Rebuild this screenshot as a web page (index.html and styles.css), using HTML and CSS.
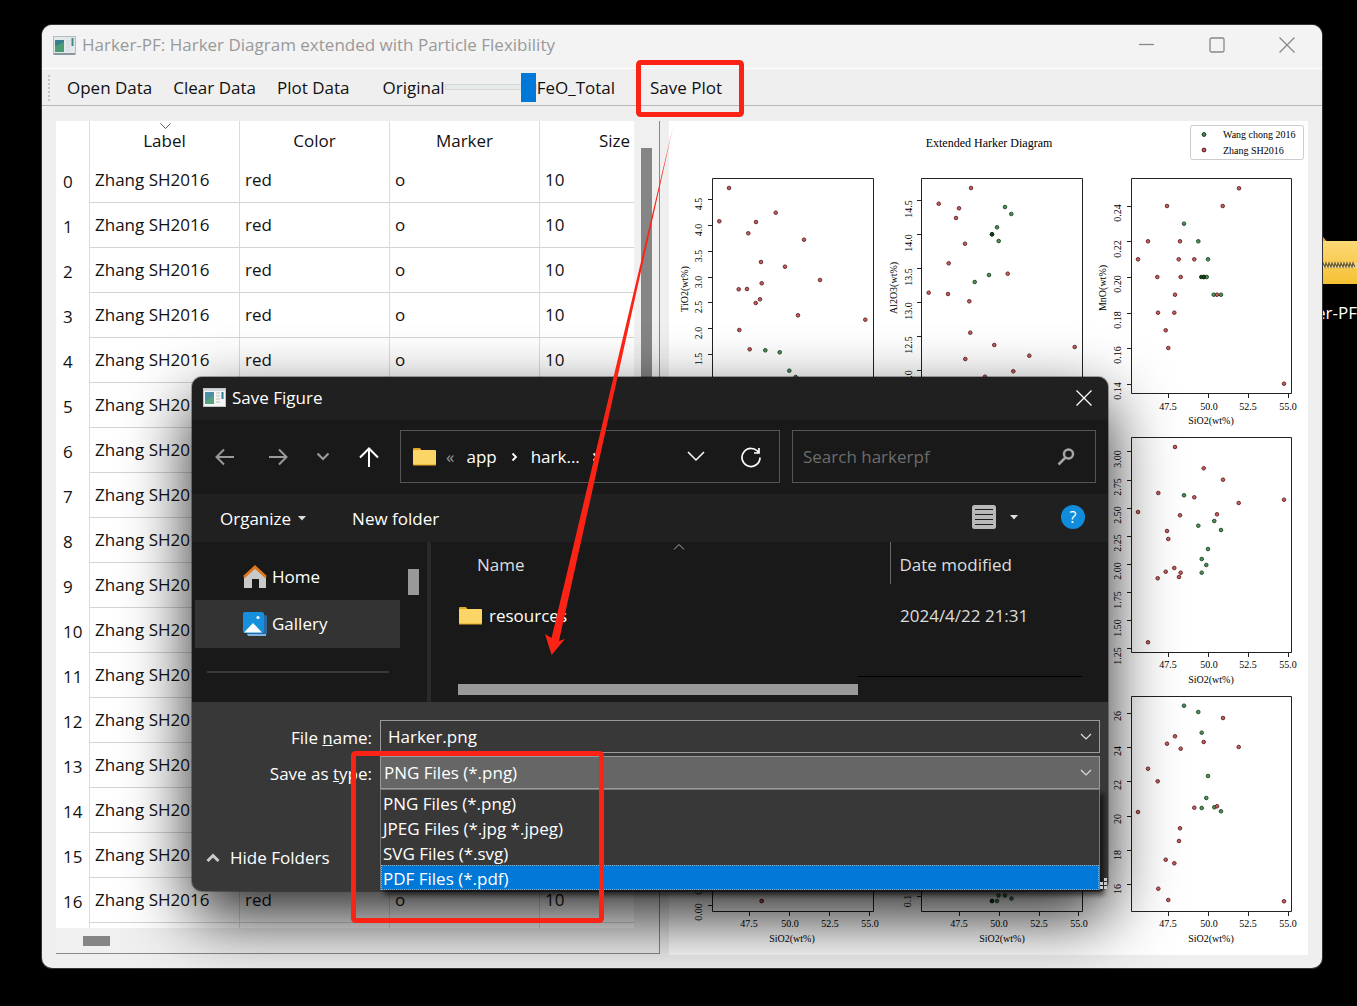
FILE: index.html
```html
<!DOCTYPE html>
<html lang="en">
<head>
<meta charset="utf-8">
<title>Harker-PF</title>
<link rel="stylesheet" href="styles.css">
</head>
<body class="desktop">
<div class="shortcut">
  <svg class="shortcut-icon" width="64" height="50" viewBox="0 0 64 50" aria-hidden="true">
    <defs><linearGradient id="zip" x1="0" y1="0" x2="0" y2="1"><stop offset="0" stop-color="#fbd976"/><stop offset="1" stop-color="#f6c033"/></linearGradient></defs>
    <path d="M2 4q0-4 4-4h19q4 0 6 3l5 6v10H2z" fill="#e2a21c"/>
    <rect x="2" y="6" width="66" height="43" fill="url(#zip)"/>
    <path d="M20 28h44v5H20z" fill="#e8d9a8"/>
    <path d="M2 32l1-4 2 4 1-4 2 4 1-4 2 4 1-4 2 4 1-4 2 4 1-4 2 4 1-4 2 4 1-4 2 4 1-4 2 4 1-4 2 4 1-4 2 4 1-4 2 4 1-4 2 4 1-4 2 4 1-4 2 4 1-4 2 4 1-4 2 4 1-4 2 4 1-4 2 4 1-4 2 4" fill="none" stroke="#6b5a2a" stroke-width="1.200"/>
  </svg>
  <span>Harker-PF</span>
</div>

<main class="app">
  <header class="app-title">
    <svg width="23" height="19" viewBox="0 0 23 19" aria-hidden="true"><rect x=".5" y=".5" width="22" height="18" fill="#e3e8eb" stroke="#b3bcc2"/><path d="M1 18h21" stroke="#8b979e" stroke-width="2"/><rect x="2" y="4" width="9" height="12" fill="#3a7c93"/><path d="M2 10l9-4v10H2z" fill="#4a9b72"/><path d="M13 5h4M13 8h4M13 11h4M13 14h4" stroke="#d0d5d9"/><path d="M19.500 2v8" stroke="#3f8a86" stroke-width="2"/></svg>
    <h1>Harker-PF: Harker Diagram extended with Particle Flexibility</h1>
    <div class="app-controls">
      <button type="button" aria-label="Minimize"><svg width="16" height="16" viewBox="0 0 16 16"><path d="M0 7.500h15"/></svg></button>
      <button type="button" aria-label="Maximize"><svg width="16" height="16" viewBox="0 0 16 16"><rect x="1" y="1" width="14" height="14" rx="1.500"/></svg></button>
      <button type="button" aria-label="Close"><svg width="16" height="16" viewBox="0 0 16 16"><path d="M.5 .5l15 15M15.500 .5l-15 15"/></svg></button>
    </div>
  </header>
  <div class="toolbar">
    <span class="toolbar-grip"></span>
    <button type="button" class="tool">Open Data</button>
    <button type="button" class="tool">Clear Data</button>
    <button type="button" class="tool">Plot Data</button>
    <div class="mode">
      <label for="mode">Original</label>
      <input id="mode" type="range" min="0" max="1" value="1">
      <span>FeO_Total</span>
    </div>
    <button type="button" class="tool">Save Plot</button>
  </div>
  <div class="workspace">
    <section class="data">
      <div class="data-view">
        <table>
          <colgroup><col class="col-index"><col class="col"><col class="col"><col class="col"><col class="col"></colgroup>
          <thead><tr><td></td><th><svg class="sort" width="12" height="6" viewBox="0 0 12 6" aria-hidden="true"><path d="M.5 .5l5 5 5-5" fill="none" stroke="#555"/></svg>Label</th><th>Color</th><th>Marker</th><th>Size</th></tr></thead>
          <tbody>
            <tr><th>0</th><td>Zhang SH2016</td><td>red</td><td>o</td><td>10</td></tr>
            <tr><th>1</th><td>Zhang SH2016</td><td>red</td><td>o</td><td>10</td></tr>
            <tr><th>2</th><td>Zhang SH2016</td><td>red</td><td>o</td><td>10</td></tr>
            <tr><th>3</th><td>Zhang SH2016</td><td>red</td><td>o</td><td>10</td></tr>
            <tr><th>4</th><td>Zhang SH2016</td><td>red</td><td>o</td><td>10</td></tr>
            <tr><th>5</th><td>Zhang SH2016</td><td>red</td><td>o</td><td>10</td></tr>
            <tr><th>6</th><td>Zhang SH2016</td><td>red</td><td>o</td><td>10</td></tr>
            <tr><th>7</th><td>Zhang SH2016</td><td>red</td><td>o</td><td>10</td></tr>
            <tr><th>8</th><td>Zhang SH2016</td><td>red</td><td>o</td><td>10</td></tr>
            <tr><th>9</th><td>Zhang SH2016</td><td>red</td><td>o</td><td>10</td></tr>
            <tr><th>10</th><td>Zhang SH2016</td><td>red</td><td>o</td><td>10</td></tr>
            <tr><th>11</th><td>Zhang SH2016</td><td>red</td><td>o</td><td>10</td></tr>
            <tr><th>12</th><td>Zhang SH2016</td><td>red</td><td>o</td><td>10</td></tr>
            <tr><th>13</th><td>Zhang SH2016</td><td>red</td><td>o</td><td>10</td></tr>
            <tr><th>14</th><td>Zhang SH2016</td><td>red</td><td>o</td><td>10</td></tr>
            <tr><th>15</th><td>Zhang SH2016</td><td>red</td><td>o</td><td>10</td></tr>
            <tr><th>16</th><td>Zhang SH2016</td><td>red</td><td>o</td><td>10</td></tr>
            <tr><th></th><td></td><td></td><td></td><td></td></tr>
          </tbody>
        </table>
      </div>
      <div class="vscroll"><div class="vthumb"></div></div>
      <div class="hscroll"><div class="hthumb"></div></div>
    </section>
    <section class="figure">
      <svg class="plots" viewBox="669 121 639 834" role="img" aria-label="Extended Harker Diagram">
        <defs>
          <marker id="r" markerUnits="userSpaceOnUse" markerWidth="6" markerHeight="6" refX="3" refY="3"><circle cx="3" cy="3" r="1.800" fill="#c95d5d" stroke="#5a2020" stroke-width=".9"/></marker>
          <marker id="g" markerUnits="userSpaceOnUse" markerWidth="6" markerHeight="6" refX="3" refY="3"><circle cx="3" cy="3" r="1.800" fill="#4d9457" stroke="#1b4020" stroke-width=".9"/></marker>
          <marker id="d" markerUnits="userSpaceOnUse" markerWidth="6" markerHeight="6" refX="3" refY="3"><circle cx="3" cy="3" r="1.800" fill="#124018" stroke="#0b2a10" stroke-width=".9"/></marker>
        </defs>
        <text class="fig-title" x="989" y="147">Extended Harker Diagram</text>
        <rect x="1190.500" y="125.500" width="113" height="34" rx="2" fill="#fff" stroke="#ccc"/>
        <polyline class="g" points="1204,134.500 1204,134.500"/><polyline class="r" points="1204,150 1204,150"/>
        <text class="legend" x="1223" y="138">Wang chong 2016</text>
        <text class="legend" x="1223" y="154">Zhang SH2016</text>

        <g class="axes">
          <path d="M712.500 178.500h161v215h-161zM921.500 178.500h161v215h-161zM1131.500 178.500h160v215h-160z"/>
          <path d="M1131.500 437.500h160v215h-160zM712.500 696.500h161v215h-161zM921.500 696.500h161v215h-161zM1131.500 696.500h160v215h-160z"/>
          <path d="M708 199.500h4M708 225.500h4M708 251.500h4M708 277.500h4M708 302.500h4M708 328.500h4M708 354.500h4M917 200.500h4M917 234.500h4M917 268.500h4M917 302.500h4M917 336.500h4M917 370.500h4M1127 206.500h4M1127 241.500h4M1127 277.500h4M1127 313.500h4M1127 348.500h4M1127 384.500h4"/>
          <path d="M1127 451.500h4M1127 480.500h4M1127 508.500h4M1127 536.500h4M1127 564.500h4M1127 592.500h4M1127 620.500h4M1127 648.500h4M1127 713.500h4M1127 747.500h4M1127 781.500h4M1127 816.500h4M1127 850.500h4M1127 884.500h4M708 905.500h4M917 896.500h4"/>
          <path d="M1168.500 394v4M1208.500 394v4M1248.500 394v4M1288.500 394v4M1168.500 653v4M1208.500 653v4M1248.500 653v4M1288.500 653v4M1168.500 912v4M1208.500 912v4M1248.500 912v4M1288.500 912v4M749.500 912v4M789.500 912v4M829.500 912v4M869.500 912v4M959.500 912v4M999.500 912v4M1039.500 912v4M1078.500 912v4"/>
        </g>
        <g class="ticks">
          <text x="1168" y="410">47.5</text><text x="1209" y="410">50.0</text><text x="1248" y="410">52.5</text><text x="1288" y="410">55.0</text><text x="1211" y="424">SiO2(wt%)</text>
          <text x="1168" y="668">47.5</text><text x="1209" y="668">50.0</text><text x="1248" y="668">52.5</text><text x="1288" y="668">55.0</text><text x="1211" y="683">SiO2(wt%)</text>
          <text x="1168" y="927">47.5</text><text x="1209" y="927">50.0</text><text x="1248" y="927">52.5</text><text x="1288" y="927">55.0</text><text x="1211" y="942">SiO2(wt%)</text>
          <text x="749" y="927">47.5</text><text x="790" y="927">50.0</text><text x="830" y="927">52.5</text><text x="870" y="927">55.0</text><text x="792" y="942">SiO2(wt%)</text>
          <text x="959" y="927">47.5</text><text x="999" y="927">50.0</text><text x="1039" y="927">52.5</text><text x="1079" y="927">55.0</text><text x="1002" y="942">SiO2(wt%)</text>
        </g>
        <g class="ticks" transform="rotate(-90)">
          <text x="-289" y="688">TiO2(wt%)</text><text x="-204" y="702">4.5</text><text x="-230" y="702">4.0</text><text x="-256" y="702">3.5</text><text x="-282" y="702">3.0</text><text x="-307" y="702">2.5</text><text x="-333" y="702">2.0</text><text x="-359" y="702">1.5</text>
          <text x="-288" y="897">Al2O3(wt%)</text><text x="-209" y="912">14.5</text><text x="-243" y="912">14.0</text><text x="-277" y="912">13.5</text><text x="-311" y="912">13.0</text><text x="-345" y="912">12.5</text><text x="-379" y="912">12.0</text>
          <text x="-288" y="1106">MnO(wt%)</text><text x="-213" y="1121">0.24</text><text x="-249" y="1121">0.22</text><text x="-284" y="1121">0.20</text><text x="-320" y="1121">0.18</text><text x="-355" y="1121">0.16</text><text x="-391" y="1121">0.14</text>
          <text x="-459" y="1121">3.00</text><text x="-487" y="1121">2.75</text><text x="-515" y="1121">2.50</text><text x="-543" y="1121">2.25</text><text x="-571" y="1121">2.00</text><text x="-600" y="1121">1.75</text><text x="-628" y="1121">1.50</text><text x="-656" y="1121">1.25</text>
          <text x="-716" y="1121">26</text><text x="-751" y="1121">24</text><text x="-785" y="1121">22</text><text x="-819" y="1121">20</text><text x="-855" y="1121">18</text><text x="-889" y="1121">16</text>
          <text x="-912" y="702">0.00</text><text x="-886" y="702">0.25</text><text x="-901" y="911">0.1</text>
        </g>
        <polyline class="r" points="729,188 719.300,221.300 756,222 748.300,233.300 775.700,212.700 804,239.700 761,262 785,266.700 820,280 761.700,283.300 738.700,289.300 747,289 760,299.300 755.700,303 798,315.300 865.300,319.700 739.300,330 749.700,349.300"/>
        <polyline class="g" points="765.300,350.300 779.700,352.300 789.300,370.700 795.700,377"/>
        <polyline class="r" points="971,188 938.700,203.700 959,208.300 956,218 965,243.700 948.700,263.300 1007.700,273.700 928.700,292.700 948,294 969.300,301.300 970.300,332.700 994.300,345 1074.700,347 1029.300,355.700 965.300,359 1013.300,371.300 985,376.700"/>
        <polyline class="g" points="1005,207 1011.300,214 997,227.300 998.700,241 989,275 974.700,282"/>
        <polyline class="d" points="992,234.300 992,234.300"/>
        <polyline class="g" points="1184,223.700 1198.300,241.300 1208,259.300 1206.700,277 1213.700,294.700 1221,294.700"/>
        <polyline class="r" points="1239,188.300 1167,206 1222.700,206 1148,241.300 1180,241.300 1138,259.300 1178.700,259.300 1194.300,259.300 1157.300,277 1180.700,277 1204,277 1175,294.700 1217,294.700 1158,312.700 1174.300,312.700 1165.700,330.300 1168.300,348 1284,383.700"/>
        <polyline class="d" points="1201.300,277 1203.700,277"/>
        <polyline class="r" points="1175,447 1203.700,468.300 1223,479.700 1158.300,493 1194.300,497.300 1238.700,503 1284,499.700 1138,512 1180,515.300 1217,514.300 1167,531 1168.300,539 1165.700,571.700 1174.300,568 1180.700,572.700 1179,577 1157.700,578.300 1148,642.300"/>
        <polyline class="g" points="1184,495.300 1214.300,521 1198.300,525.700 1221,530 1208,549 1201.700,559 1206.300,565 1201.700,572.700"/>
        <polyline class="g" points="1184,705.700 1198.300,712 1201.700,732.700 1208,776 1206.300,798 1201.700,808 1214.300,807.300 1221,811.300"/>
        <polyline class="r" points="1223,718 1175,736.300 1167,743.700 1180.700,748.700 1203.700,742 1238.700,747 1148,768.700 1157.700,781.300 1138,812 1194.300,807.700 1217,806.300 1180,828.300 1179,841 1165.700,859.700 1174.300,863.300 1158.300,888.700 1168.300,900 1284,901.300"/>
        <polyline class="r" points="761.700,901 761.700,901"/>
        <polyline class="d" points="992,901 992,901"/>
        <polyline class="g" points="997,901 998.500,895.500 1005,895.500 1011.500,898.500"/>
      </svg>
    </section>
  </div>
</main>

<div class="dialog" role="dialog" aria-label="Save Figure">
  <header class="dlg-title">
    <svg width="23" height="19" viewBox="0 0 23 19" aria-hidden="true"><rect x=".5" y=".5" width="22" height="18" fill="#f6f6f6" stroke="#bfc4c8"/><path d="M1 2h21" stroke="#d3d8dc" stroke-width="2"/><rect x="2" y="4" width="9" height="12" fill="#4b8fa5"/><path d="M2 12q5-1 9-6v10H2z" fill="#56a37d"/><path d="M13 5h4M13 8h4M13 11h4M13 14h4" stroke="#bbb"/><path d="M19.500 4v7" stroke="#2f7f8f" stroke-width="2"/></svg>
    <h2>Save Figure</h2>
    <button type="button" aria-label="Close"><svg width="16" height="16" viewBox="0 0 16 16"><path d="M.5 .5l15 15M15.500 .5l-15 15" stroke="#fff" stroke-width="1.300"/></svg></button>
  </header>
  <nav class="dlg-nav">
    <button type="button" aria-label="Back"><svg width="20" height="20" viewBox="0 0 20 20"><path d="M19 10H2M9 2.500L1.500 10 9 17.500" stroke="#9a9a9a" stroke-width="2"/></svg></button>
    <button type="button" aria-label="Forward"><svg width="20" height="20" viewBox="0 0 20 20"><path d="M1 10h17M11 2.500l7.500 7.500-7.500 7.500" stroke="#9a9a9a" stroke-width="2"/></svg></button>
    <button type="button" class="narrow" aria-label="Recent locations"><svg width="14" height="9" viewBox="0 0 14 9"><path d="M1.500 1.500L7 7l5.500-5.500" stroke="#9a9a9a" stroke-width="2.200"/></svg></button>
    <button type="button" aria-label="Up"><svg width="20" height="20" viewBox="0 0 20 20"><path d="M10 20V1.500M1 10.500l9-9 9 9" stroke="#fff" stroke-width="2"/></svg></button>
    <div class="address">
      <svg width="23" height="18" viewBox="0 0 23 18"><path d="M0 1q0-1 1-1h6l2 3H0z" fill="#e5a520"/><rect y="2" width="23" height="15" rx="1" fill="#fcd567"/><path d="M0 17h23" stroke="#e5a520"/></svg>
      <span class="more">«</span><a href="#app">app</a>
      <svg width="7" height="10" viewBox="0 0 7 10"><path d="M1.500 1.500L5 5 1.500 8.500" stroke="#fff" stroke-width="1.800"/></svg>
      <a href="#harkerpf" class="here">hark...</a>
      <svg width="7" height="10" viewBox="0 0 7 10"><path d="M1.500 1.500L5 5 1.500 8.500" stroke="#fff" stroke-width="1.800"/></svg>
      <button type="button" class="history" aria-label="Previous locations"><svg width="18" height="11" viewBox="0 0 18 11"><path d="M1 1l8 8 8-8" stroke="#fff" stroke-width="1.500"/></svg></button>
      <button type="button" aria-label="Refresh"><svg width="22" height="22" viewBox="0 0 22 22"><path d="M18.500 6.500a9 9 0 1 0 1.500 5M19 2v5h-5" stroke="#fff" stroke-width="1.700"/></svg></button>
    </div>
    <div class="search">
      <input type="search" placeholder="Search harkerpf" aria-label="Search harkerpf">
      <svg width="18" height="18" viewBox="0 0 18 18"><circle cx="11.500" cy="6" r="4.500" stroke="#a5a5a5" stroke-width="2.500"/><path d="M8.500 9.500L1.500 16.500" stroke="#a5a5a5" stroke-width="2.500"/></svg>
    </div>
  </nav>
  <div class="dlg-commands">
    <button type="button">Organize<svg width="8" height="5" viewBox="0 0 8 5"><path d="M0 0h8L4 4.500z" fill="#ddd" stroke="none"/></svg></button>
    <button type="button" class="new-folder">New folder</button>
    <button type="button" class="view" aria-label="Change view"><svg width="24" height="24" viewBox="0 0 24 24"><rect width="24" height="24" rx="2.500" fill="#b9b9b9"/><path d="M3 4.500h18M3 9.500h18M3 14.500h18M3 19.500h18" stroke="#1c1c1c"/></svg><svg width="8" height="5" viewBox="0 0 8 5"><path d="M0 0h8L4 4.500z" fill="#ddd" stroke="none"/></svg></button>
    <button type="button" class="help" aria-label="Help">?</button>
  </div>
  <div class="dlg-body">
    <div class="places">
      <a href="#home" class="place"><svg width="24" height="24" viewBox="0 0 24 24"><path d="M1 11L12 1l11 10v12h-7V14H9v9H1z" fill="#c9c9c9"/><path d="M1 12L12 2l11 10" stroke="#e0761c" stroke-width="2.800"/></svg>Home</a>
      <a href="#gallery" class="place current"><svg width="24" height="24" viewBox="0 0 24 24"><rect x="4" y="3" width="20" height="20" rx="2" fill="#2b67a0"/><path d="M4 22h19v2H5z" fill="#7db4e2"/><rect width="21" height="21" rx="2" fill="#1690dc"/><path d="M1 20.500l9-9.500 9 9.500z" fill="#fff"/><circle cx="15" cy="5.500" r="1.600" fill="#fff"/></svg>Gallery</a>
      <hr>
    </div>
    <div class="places-scroll"><div class="places-thumb"></div></div>
    <div class="files">
      <table>
        <thead><tr><th class="name"><svg class="asc" width="12" height="6" viewBox="0 0 12 6" aria-hidden="true"><path d="M1 5.500l5-5 5 5" stroke="#aaa"/></svg>Name</th><th class="date">Date modified</th></tr></thead>
        <tbody><tr><td class="name"><div class="file"><svg width="23" height="18" viewBox="0 0 23 18"><path d="M0 1q0-1 1-1h6l2 3H0z" fill="#e5a520"/><rect y="2" width="23" height="15" rx="1" fill="#fcd567"/><path d="M0 17h23" stroke="#e5a520"/></svg>resources</div></td><td class="date">2024/4/22 21:31</td></tr></tbody>
      </table>
      <div class="files-scroll"><div class="files-thumb"></div><div class="files-rule"></div></div>
    </div>
  </div>
  <form class="dlg-form">
    <label for="fname">File <u>n</u>ame:</label>
    <div class="field">
      <input id="fname" type="text" value="Harker.png">
      <svg class="drop" width="12" height="7" viewBox="0 0 12 7"><path d="M1 1l5 5 5-5" stroke="#ddd" stroke-width="1.200"/></svg>
    </div>
    <label for="ftype">Save as <u>t</u>ype:</label>
    <div class="field type">
      <select id="ftype"><option>PNG Files (*.png)</option><option>JPEG Files (*.jpg *.jpeg)</option><option>SVG Files (*.svg)</option><option>PDF Files (*.pdf)</option></select>
      <svg class="drop" width="12" height="7" viewBox="0 0 12 7"><path d="M1 1l5 5 5-5" stroke="#ddd" stroke-width="1.200"/></svg>
      <ul class="options" role="listbox">
        <li role="option">PNG Files (*.png)</li>
        <li role="option">JPEG Files (*.jpg *.jpeg)</li>
        <li role="option">SVG Files (*.svg)</li>
        <li role="option" class="active" aria-selected="true">PDF Files (*.pdf)</li>
      </ul>
    </div>
    <button type="button" class="hide"><svg width="14" height="10" viewBox="0 0 14 10"><path d="M1.500 8L7 2.500 12.500 8" stroke="#ccc" stroke-width="3"/></svg>Hide Folders</button>
    <svg class="grip" width="7" height="12" viewBox="0 0 7 12"><path d="M4 0h3v3H4zM0 4h3v3H0zM4 4h3v3H4zM0 8h3v3H0zM4 8h3v3H4z" fill="#ccc"/></svg>
  </form>
</div>

<svg class="notes" width="1357" height="1006" viewBox="0 0 1357 1006" aria-hidden="true">
  <rect x="638.500" y="62.500" width="103" height="52" rx="2"/>
  <rect x="353.500" y="753.500" width="248" height="167" rx="2"/>
  <path d="M551.600 655L545 634l6.500 4L673 127 559 641l6-2z"/>
</svg>
</body>
</html>
```
FILE: styles.css
```css
* { box-sizing: border-box; }
body, h1, h2, ul { margin: 0; padding: 0; }
button, input, select { font: inherit; color: inherit; }
button { margin: 0; padding: 0; border: 0; background: none; }
a { color: inherit; text-decoration: none; }
svg { flex: none; display: block; }

.desktop {
  position: relative;
  display: flex;
  min-height: 100vh;
  padding: 25px 35px 38px 42px;
  overflow: hidden;
  background: #000;
  color: #111;
  font: 17px/24px "Open Sans", "Noto Sans", sans-serif;
}
.shortcut {
  position: absolute;
  top: 235px;
  right: 0;
  display: flex;
  flex-direction: column;
  align-items: flex-end;
  gap: 16px;
  color: #fff;
}

/* Main window */
.app {
  position: relative;
  flex: 1;
  display: flex;
  flex-direction: column;
  min-width: 0;
  border-radius: 10px;
  background: #efefef;
  box-shadow: 0 0 0 1px #333;
}
.app-title {
  display: flex;
  align-items: center;
  gap: 6px;
  height: 44px;
  padding: 0 27px 3px 11px;
  border-bottom: 1px solid #fff;
  border-radius: 10px 10px 0 0;
  background: #f3f3f3;
}
.app-title h1 { color: #999; font-size: 17px; font-weight: 400; }
.app-controls { display: flex; gap: 54px; margin-left: auto; }
.app-controls svg { fill: none; stroke: #888; stroke-width: 1.3; }
.toolbar {
  display: flex;
  align-items: center;
  height: 37px;
  padding: 2px 6px 0;
  border-bottom: 1px solid #b5b9b9;
}
.toolbar-grip { width: 2px; height: 26px; margin-right: 17px; border-left: 2px dotted #c4c4c4; }
.tool { margin-right: 21px; }
.mode { display: flex; align-items: center; margin: 0 35px 0 12px; }
.mode input { appearance: none; width: 92px; height: 30px; margin: 0 0 2px; background: none; }
.mode input::-webkit-slider-runnable-track { height: 6px; border: 1px solid #d6d6d6; background: #e7eaea; }
.mode input::-webkit-slider-thumb { appearance: none; width: 15px; height: 29px; margin-top: -12px; background: #0078d7; }

.workspace {
  flex: 1;
  display: grid;
  grid-template-columns: 604px 1fr;
  gap: 9px;
  min-height: 0;
  padding: 15px 14px 13px 14px;
}
.data {
  display: grid;
  grid-template: 1fr 24px / 578px 1fr;
  min-height: 0;
  margin-bottom: 1px;
  border-right: 1px solid #888;
  border-bottom: 1px solid #888;
}
.data-view { height: 807px; overflow: hidden; background: #fff; }
.data-view table { width: 633px; border-collapse: separate; border-spacing: 0; table-layout: fixed; }
.col-index { width: 33px; }
.col { width: 150px; }
.data-view th { font-weight: 400; }
.data-view td, .data-view th { height: 45px; padding: 0 0 0 5px; border-left: 1px solid #dcdcdc; text-align: left; }
.data-view tbody td { border-bottom: 1px solid #d4d4d4; }
.data-view tbody th { padding: 2px 0 0 7px; border: 0; }
.data-view thead td { height: 37px; border: 0; }
.data-view thead th { position: relative; height: 37px; padding: 3px 0 0; text-align: center; }
.sort { position: absolute; top: 2px; left: 70px; }
.vscroll { padding: 27px 7px 0; background: #f0f0f0; }
.vthumb { width: 11px; height: 600px; background: #858585; }
.hscroll { grid-column: 1 / 3; padding: 7px 27px; background: #f0f0f0; }
.hthumb { width: 27px; height: 10px; background: #858585; }

.figure { min-width: 0; background: #fff; }
.plots { width: 100%; height: auto; font-family: "Liberation Serif", serif; }
.fig-title { font-size: 12px; text-anchor: middle; }
.legend { font-size: 10px; }
.ticks { font-size: 10px; text-anchor: middle; }
.axes { fill: none; stroke: #222; }
.plots polyline { fill: none; stroke: none; }
.r { marker-start: url(#r); marker-mid: url(#r); marker-end: url(#r); }
.g { marker-start: url(#g); marker-mid: url(#g); marker-end: url(#g); }
.d { marker-start: url(#d); marker-mid: url(#d); marker-end: url(#d); }

/* Save dialog */
.dialog {
  position: absolute;
  top: 377px;
  left: 192px;
  width: 916px;
  border-radius: 10px;
  background: #383838;
  color: #fff;
  box-shadow: 0 0 0 1px rgba(0, 0, 0, .3), 0 26px 66px rgba(0, 0, 0, .85);
}
.dialog svg { fill: none; }
.dlg-title {
  display: flex;
  align-items: center;
  gap: 6px;
  height: 43px;
  padding: 0 16px 2px 11px;
  border-radius: 10px 10px 0 0;
  background: #202020;
}
.dlg-title h2 { font-size: 17px; font-weight: 400; }
.dlg-title button { margin-left: auto; }
.dlg-nav {
  display: flex;
  align-items: center;
  height: 74px;
  padding: 0 12px 1px 23px;
  background: #191919;
}
.dlg-nav > button { margin-right: 33px; }
.dlg-nav > .narrow { margin: 0 29px 0 -5px; }
.dlg-nav > button:nth-child(4) { margin-right: 21px; }
.address, .search { display: flex; align-items: center; height: 53px; border: 1px solid #555; }
.address { flex: 0 0 380px; padding: 0 17px 0 12px; }
.address a { margin: 0 14px 0 12px; }
.address .here { margin: 0 12px 0 13px; }
.more { margin-left: 10px; color: #999; }
.address .history { margin: 0 35px 0 auto; }
.search { flex: 1; min-width: 0; margin-left: 12px; padding: 0 20px 0 10px; }
.search input { flex: 1; min-width: 0; padding: 0; border: 0; background: none; outline: 0; }
.search input::placeholder { color: #6c6c6c; opacity: 1; }
.dlg-commands {
  display: flex;
  align-items: center;
  height: 48px;
  padding: 1px 23px 0 28px;
  background: #202020;
}
.dlg-commands button { display: flex; align-items: center; gap: 7px; }
.dlg-commands .new-folder { margin-left: 46px; }
.dlg-commands .view { gap: 14px; margin: 0 43px 3px auto; }
.dlg-commands .help {
  justify-content: center;
  width: 24px;
  height: 24px;
  margin-bottom: 3px;
  border-radius: 50%;
  background: #118bdc;
  font-size: 16px;
}
.dlg-body {
  display: grid;
  grid-template-columns: 205px 31px 1fr;
  height: 160px;
  padding-left: 3px;
  background: #191919;
}
.places { padding-top: 11px; }
.place { display: flex; align-items: center; gap: 5px; height: 47px; padding-left: 48px; }
.current { height: 48px; background: #333; }
.places hr { height: 2px; margin: 23px 11px 0 12px; border: 0; background: #383838; }
.places-scroll { padding: 27px 8px; border-right: 4px solid #292929; }
.places-thumb { width: 11px; height: 26px; background: #999; }
.files { display: flex; flex-direction: column; justify-content: space-between; min-width: 0; }
.files table { width: 100%; border-collapse: collapse; table-layout: fixed; }
.files th, .files td { padding: 0; color: #ddd; font-weight: 400; text-align: left; }
.files thead th { position: relative; height: 42px; padding-top: 4px; }
.files .name { width: 459px; padding-left: 46px; }
.files .date { padding-left: 9px; }
.files thead .date { border-left: 1px solid #666; }
.files tbody td { height: 63px; }
.files tbody .name { padding-left: 28px; color: #fff; }
.files tbody .date { padding-left: 10px; }
.file { display: flex; align-items: center; gap: 7px; }
.asc { position: absolute; top: 2px; left: 242px; }
.files-scroll { display: flex; height: 26px; padding: 0 26px 0 27px; }
.files-thumb { width: 400px; height: 11px; margin-top: 8px; background: #999; }
.files-rule { flex: 1; height: 1px; background: #000; }

.dlg-form {
  position: relative;
  display: grid;
  grid-template: 33px 33px / 180px 1fr;
  gap: 3px 8px;
  height: 189px;
  padding: 18px 8px 0 0;
}
.dlg-form label { padding-top: 6px; text-align: right; }
.field { position: relative; }
.field input, .field select {
  appearance: none;
  width: 100%;
  height: 33px;
  margin: 0;
  padding: 0 30px 0 7px;
  border: 1px solid #9a9a9a;
  border-radius: 0;
  outline: 0;
  background: #383838;
}
.field select { padding-left: 3px; background: #666; }
.drop { position: absolute; top: 13px; right: 8px; }
.options {
  position: absolute;
  top: 33px;
  left: 0;
  right: 0;
  border: 1px solid #777;
  border-bottom: 0;
  background: #383838;
  list-style: none;
  box-shadow: 4px 5px 5px rgba(0, 0, 0, .6);
}
.options li { height: 25px; padding: 2px 2px 0; line-height: 23px; }
.options .active { padding: 1px 1px 0; border: 1px dotted #7fb4dd; background: #0078d7; }
.hide { position: absolute; left: 14px; bottom: 21px; display: flex; align-items: center; gap: 10px; }
.grip { position: absolute; right: 1px; bottom: 1px; }

/* Red call-outs over the whole desktop */
.notes { position: absolute; top: 0; left: 0; pointer-events: none; }
.notes rect { fill: none; stroke: #fb2315; stroke-width: 5; }
.notes path { fill: #fb2315; }
```
